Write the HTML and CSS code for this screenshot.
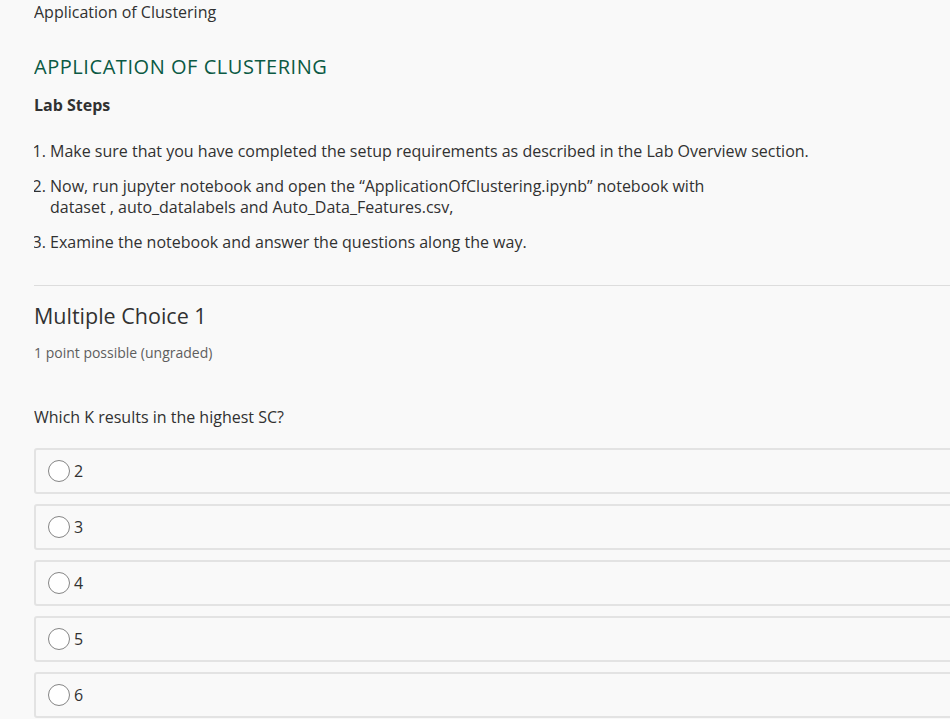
FILE: index.html
```html
<!DOCTYPE html>
<html>
<head>
<meta charset="utf-8">
<link rel="stylesheet" href="styles.css">
</head>
<body>
<div class="page">
  <div class="unit-title">Application of Clustering</div>
  <h2 class="section-heading">APPLICATION OF CLUSTERING</h2>
  <h3 class="lab-steps">Lab Steps</h3>
  <ol class="steps">
    <li>Make sure that you have completed the setup requirements as described in the Lab Overview section.</li>
    <li>Now, run jupyter notebook and open the “ApplicationOfClustering.ipynb” notebook with<br>dataset , auto_datalabels and Auto_Data_Features.csv,</li>
    <li>Examine the notebook and answer the questions along the way.</li>
  </ol>
  <hr class="divider">
  <h3 class="problem-title">Multiple Choice 1</h3>
  <div class="points">1 point possible (ungraded)</div>
  <p class="question">Which K results in the highest SC?</p>
  <div class="choices">
    <label class="choice"><span class="radio"></span><span class="choice-text">2</span></label>
    <label class="choice"><span class="radio"></span><span class="choice-text">3</span></label>
    <label class="choice"><span class="radio"></span><span class="choice-text">4</span></label>
    <label class="choice"><span class="radio"></span><span class="choice-text">5</span></label>
    <label class="choice"><span class="radio"></span><span class="choice-text">6</span></label>
  </div>
</div>
</body>
</html>
```
FILE: styles.css
```css
html, body {
  margin: 0;
  padding: 0;
  background: #f9f9f9;
}
body {
  font-family: "Open Sans", "DejaVu Sans", sans-serif;
  color: #313131;
}
.page {
  margin-left: 34px;
  width: 916px;
  overflow: hidden;
}
.unit-title {
  font-size: 16px;
  line-height: 22px;
  color: #313131;
  padding-top: 1px;
}
.section-heading {
  margin: 31px 0 0 0;
  font-size: 20px;
  line-height: 26px;
  font-weight: 400;
  letter-spacing: 0.55px;
  color: #0b5a44;
}
.lab-steps {
  margin: 14px 0 0 0;
  font-size: 16px;
  line-height: 22px;
  font-weight: 700;
  color: #313131;
}
.steps {
  margin: 25px 0 0 0;
  padding: 0 0 0 16px;
  font-size: 16px;
  line-height: 21px;
}
.steps li {
  margin-bottom: 14px;
}
.steps li:last-child {
  margin-bottom: 0;
}
.divider {
  margin: 32px 0 0 0;
  border: none;
  border-top: 1px solid #dddddd;
  height: 0;
}
.problem-title {
  margin: 15px 0 0 0;
  font-size: 21.5px;
  line-height: 30px;
  font-weight: 400;
  color: #313131;
}
.points {
  margin-top: 12px;
  font-size: 14px;
  line-height: 19px;
  color: #5e5e5e;
}
.question {
  margin: 44px 0 0 0;
  font-size: 16px;
  line-height: 22px;
}
.choices {
  margin-top: 20px;
  display: flex;
  flex-direction: column;
  gap: 10px;
  margin-right: -10px;
}
.choice {
  display: flex;
  align-items: center;
  height: 42px;
  border: 2px solid #e3e3e3;
  border-radius: 3px;
  padding-left: 12px;
}
.radio {
  width: 20px;
  height: 20px;
  border: 1px solid #858585;
  border-radius: 50%;
  background: #ffffff;
  box-sizing: content-box;
}
.choice-text {
  margin-left: 4px;
  font-size: 16px;
  line-height: 22px;
}
```
